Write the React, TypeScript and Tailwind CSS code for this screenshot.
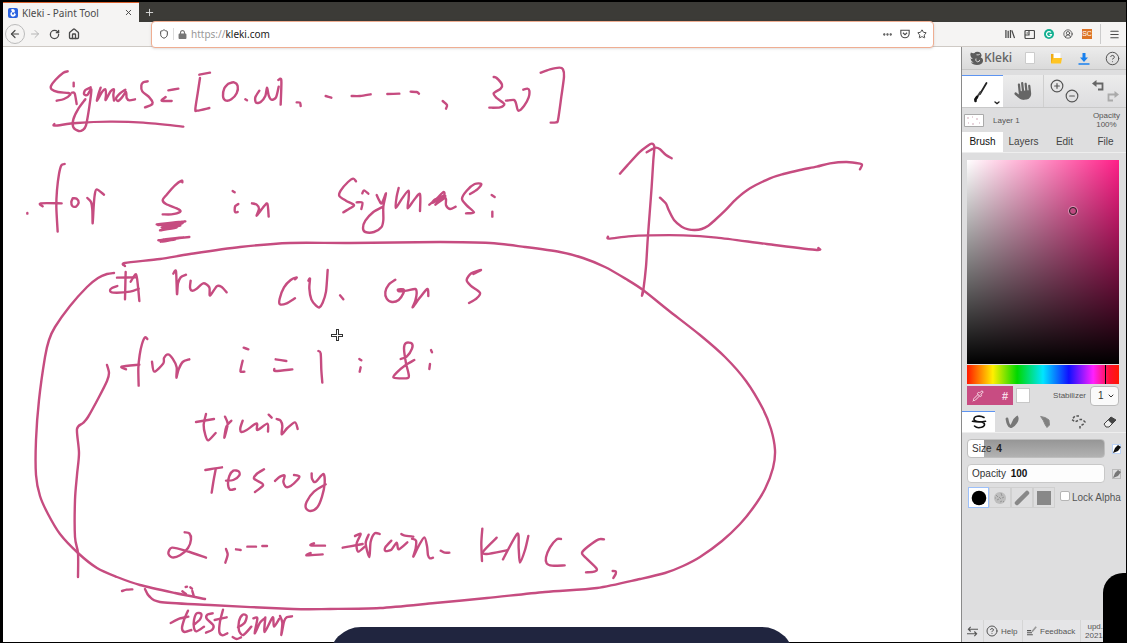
import React, { useState } from "react";
import {
  ArrowLeft, ArrowRight, RotateCw, House, Shield, Ellipsis, Star, Menu, X, Plus,
  CircleQuestionMark, CirclePlus, CircleMinus, ChevronDown, Pipette, CircleUserRound,
} from "lucide-react";
import { FaHand, FaLock } from "react-icons/fa6";

type Sheet = { x: number; y: number; unit: number; strokes: string[] };

const sheets: Sheet[] = [
  {
    x: 0, y: 50, unit: 3,
    strokes: [
      "203,64 190,68 166,90 153,108 155,118 174,126 205,129 211,134 192,147 170,152",
      "221,98 221,109", "216,128 224,130 230,162",
      "272,112 256,120 252,132 262,135 274,118 268,170 258,226 248,240 236,243 220,232 220,208 234,178 256,148",
      "302,113 296,130 291,152 306,126 316,118 318,134 317,150 332,124 342,118 340,135 342,152",
      "376,119 360,130 348,145 354,153 366,142 378,126 380,144 388,151 405,148",
      "443,94 430,97 424,106 427,124 448,142 458,158 452,166 435,172",
      "505,121 535,116", "497,141 485,152 515,153",
      "630,68 598,74", "600,84 593,130 586,178 592,182 628,174",
      "685,101 673,115 669,138 676,151 694,148 710,130 713,108 702,97 685,101",
      "736,148 741,151",
      "778,122 766,142 768,158 782,156 796,138 801,113 806,136 814,149 828,142 836,110",
      "835,90 844,91 842,164", "890,157 900,158 902,168",
      "163,222 165,227 230,219 330,215 430,218 550,230",
      "82,489 82,491",
      "194,342 184,346 177,372 171,420 169,470 173,545", "128,469 122,460 185,460",
      "218,445 214,456 217,468 228,470 236,458 230,446 218,445",
      "262,444 273,456 277,480 278,520 281,470 284,436 290,418 312,434",
      "547,397 545,392 525,406 500,434 488,450 498,462 536,478 540,486 514,493 488,493",
      "470,523 556,514 474,525 548,519 485,532 541,527 480,541 530,532 500,530 545,521",
      "568,561 475,571 550,562 482,575 526,568 490,568",
    ],
  },
  {
    x: 0, y: 50, unit: 3,
    strokes: [
      "698,423 704,427", "715,462 706,468 704,480 706,487 713,486",
      "756,460 770,464 777,476 770,497 788,474 802,461 806,500",
    ],
  },
  {
    x: 300, y: 50, unit: 3,
    strokes: [
      "77,138 94,143", "155,138 180,138 212,133", "262,132 298,131", "332,125 350,126 357,131",
      "428,153 441,165 438,176",
      "581,81 590,84 606,104 602,116 581,130 590,144 613,162 600,172 568,173",
      "618,152 642,150 648,160 655,182 672,168 686,142 688,122 682,116 670,119",
      "722,68 750,58 778,53 789,58 792,80 784,140 774,210 768,217 752,218",
      "168,394 160,386 144,396 122,422 118,438 138,452 162,465 150,475 130,487",
      "187,430 192,421 205,431", "170,457 187,458 184,477",
      "230,435 236,448 245,460 258,430 250,470 250,510 244,532 222,546 196,546 189,534 196,512 220,486 245,472",
      "296,414 290,440 287,474 306,446 325,422 326,445 323,475 342,450 360,432 360,483",
      "388,464 410,446 430,426 432,436 406,448 398,458 436,438 406,464 436,444 438,466 450,477 467,470",
      "510,432 532,418 544,402 524,402 500,422 486,446 500,466 522,487 498,490",
      "575,435 584,441", "577,485 577,500",
    ],
  },
  {
    x: 600, y: 130, unit: 3,
    strokes: [
      "60,131 82,106 118,67 142,48 155,41 163,50 160,90 155,170 149,250 143,330 138,410 130,480 126,497 128,485",
      "140,67 155,58 168,53 180,58 198,75 215,85",
      "24,320 27,326 85,319 150,316 250,316 350,323 500,342 650,360 655,354",
      "180,203 198,221 206,240 222,270 245,290 265,298 285,300 305,297 325,287 345,270 375,242 410,206 450,175 510,145 550,132 600,120 650,110 690,100 740,96 780,101 786,105 780,118",
    ],
  },
  {
    x: 0, y: 0, unit: 1,
    strokes: [
      "125,266 125,263 160,259 190,254 240,247 290,243 350,243 440,242 490,243 525,247 560,252 583,258 605,267 626,279 643,290 668,310 700,335 725,357 746,381 763,409 771,429 775,450 773,468 765,489 753,508 740,524 722,541 700,557 683,566 665,573 640,579 597,588 545,592 487,598 435,603 380,608 330,609 293,609 210,605 160,602 149,596 145,589",
      "114,273 107,274 98,278 87,287 70,306 55,327 49,340 45,357 39,400 36,440 36,475 40,496 48,514 60,534 78,553 97,568 117,577 140,585 175,593 205,599",
      "107,365 109,373 107,381 99,397 88,417 83,423 77,429 79,453 77,475 75,500 75,537 78,553 78,577",
    ],
  },
  {
    x: 30, y: 240, unit: 3,
    strokes: [
      "287,96 286,135 285,178", "302,125 318,103 324,140 328,183", "261,113 318,112",
      "262,138 246,144 240,152 250,158 300,155 326,146",
      "430,101 438,94 441,162 444,130 452,112 468,104",
      "482,122 480,142 486,152 500,146 520,130 538,142 540,167 560,139 574,140 590,157",
      "352,297 345,292 336,312 329,345 325,385 326,437", "288,388 275,380 328,374",
      "366,365 373,395 400,370 402,354 414,343 428,356 440,382 439,413 446,388 458,366 478,358",
      "641,323 655,328", "638,362 632,388 632,395 643,395",
    ],
  },
  {
    x: 260, y: 240, unit: 3,
    strokes: [
      "105,118 110,112 92,120 72,142 59,176 60,193 80,190 105,175",
      "145,122 150,116 148,145 154,178 168,197 178,202 188,188 198,155 203,90", "240,166 250,178",
      "406,119 386,134 376,156 380,176 396,186 416,180 430,160 430,148 414,149 418,154 440,152 466,147 470,160 466,182 458,202 478,175 502,147 505,168",
      "640,102 663,90 634,100 620,120 632,137 660,158 650,175 627,189",
      "47,358 79,363", "43,387 47,393 97,388", "175,333 182,340 184,390 187,428",
      "298,357 304,361", "302,382 299,395",
      "463,360 436,376 410,398 400,412 418,415 445,413 445,398 438,370 432,325 438,309 455,310 456,326 440,350 422,357",
      "513,330 516,337", "510,372 508,387",
    ],
  },
  {
    x: 60, y: 400, unit: 3,
    strokes: [
      "438,42 431,75 436,105 445,121 467,99", "408,66 462,57",
      "495,50 503,70 499,92 493,113 499,80 514,62",
      "548,62 541,84 544,96 560,90 590,70 592,90 622,71 624,95", "626,44 635,53",
      "650,57 662,62 667,78 665,103 682,84 705,67 713,87",
      "436,210 460,206 486,202", "467,208 461,240 455,278",
      "498,242 520,240 538,226 536,214 520,212 508,228 504,252 510,269 525,267",
      "612,208 590,222 582,236 606,250 608,258 585,276",
      "645,243 660,230 674,227 670,245 678,261 692,258 712,240 718,229 702,225",
      "755,220 756,236 766,246 790,222 794,250 786,290 772,322 752,333 738,325 740,305 762,275 797,253",
      "374,397 388,400 393,418 384,444 360,466 336,472 325,460 336,443 380,453 438,473",
      "498,447 503,464 496,488", "528,448 542,450", "562,440 588,440", "607,438 621,438",
      "762,430 752,436 795,437", "752,459 740,466 788,463",
      "186,573 200,569 217,568", "377,561 381,560", "391,562 396,566", "367,574 378,582", "397,573 401,587",
      "384,632 372,660 366,685 374,696 394,690", "332,669 358,656 385,650",
      "402,674 420,658 424,642 410,640 402,660 402,684 410,694 432,680",
      "458,640 442,644 440,656 460,676 456,690 438,698",
      "489,629 480,665 478,696 488,706 502,700", "464,660 500,652",
      "518,711 530,717 543,712",
      "534,682 554,668 560,648 548,644 537,664 537,692 550,705 574,680",
      "580,655 592,655 584,700 600,668 614,655", "616,652 614,696 638,652 642,680 658,656",
      "660,648 667,668 664,705 672,665 680,652 696,649",
    ],
  },
  {
    x: 330, y: 500, unit: 3,
    strokes: [
      "75,108 92,102 80,130 84,155 104,140", "38,143 60,139 98,132",
      "116,104 107,130 118,171 122,125 134,100 149,102",
      "184,122 166,142 166,153 184,149 200,128 206,148 232,127", "214,102 222,106 250,110",
      "246,116 258,122 257,145 250,170 266,138 283,112 291,138 294,166 300,175 309,173",
      "332,152 344,158 358,158",
      "457,86 454,130 456,183", "500,113 460,154 470,162 530,151",
      "519,178 562,101 566,145 570,188 585,150 595,108",
      "693,117 680,118 660,142 648,172 650,190 666,197 704,196",
      "822,118 806,118 776,138 756,158 768,174 800,206 792,215 768,217", "848,213 857,214 857,222 850,234",
    ],
  },
];

/* Turns sampled pen positions into a smooth curve. */
function smooth(samples: string): string {
  const p = samples.split(" ").map((s) => s.split(",").map(Number));
  let d = `M${p[0][0]} ${p[0][1]}`;
  for (let i = 0; i < p.length - 1; i++) {
    const a = p[i - 1] ?? p[i];
    const b = p[i];
    const c = p[i + 1];
    const e = p[i + 2] ?? c;
    const k = 7;
    d += `C${b[0] + (c[0] - a[0]) / k} ${b[1] + (c[1] - a[1]) / k} ${c[0] - (e[0] - b[0]) / k} ${c[1] - (e[1] - b[1]) / k} ${c[0]} ${c[1]}`;
  }
  return d;
}

function Canvas() {
  return (
    <main className="min-w-0 flex-1 overflow-hidden bg-white">
      <svg className="block h-full w-full" viewBox="3 47 958 595" preserveAspectRatio="xMinYMin slice" fill="none" strokeLinecap="round" strokeLinejoin="round" role="img" aria-label="Canvas">
        {sheets.map((s, i) => (
          <g key={i} transform={`translate(${s.x} ${s.y}) scale(${1 / s.unit})`} stroke="#c64c80" strokeWidth={2.4 * s.unit}>
            {s.strokes.map((t, j) => <path key={j} d={smooth(t)} />)}
          </g>
        ))}
        <path d="M331 335.500h12M337.500 329v12" stroke="#333" strokeWidth="3" strokeLinecap="butt" />
        <path d="M332 335.500h10M337.500 330v10" stroke="#fff" strokeWidth="1" strokeLinecap="butt" />
      </svg>
    </main>
  );
}

function Browser() {
  return (
    <header>
      <div className="flex h-5 bg-[#3c3b37]">
        <div className="flex w-[136px] items-center border-t border-[#d9602c] bg-[#f5f4f3] pl-[5px] pr-[5px]">
          <svg viewBox="0 0 10 10" className="size-[10px]"><rect width="10" height="10" rx="2" fill="#2b63e0" /><path d="M3 1.500Q6 0 7 3L6 5Q9 6 7 8Q4 10 2.500 7Q2 4 4 4Z" fill="#fff" /><path d="M4 4.500h2v2H4z" fill="#2b63e0" /></svg>
          <span className="ml-1 flex-1 font-['Noto_Sans',sans-serif] text-[10px] leading-4 text-[#4a4a4a]">Kleki - Paint Tool</span>
          <button aria-label="Close tab" className="p-px"><X className="size-[9px] text-[#444]" strokeWidth={2.5} /></button>
        </div>
        <button aria-label="New tab" className="px-[5px] text-[#ddd]"><Plus className="size-[11px]" /></button>
      </div>
      <div className="flex h-[25px] items-center border-b border-[#cfcac5] bg-[#f5f4f3] text-[#4a4a4a]">
        <nav className="flex w-[148px] items-center gap-[8px] pl-[2px]">
          <button aria-label="Back" className="grid size-5 place-items-center rounded-full border border-[#bbb]"><ArrowLeft className="size-3" strokeWidth={2.4} /></button>
          <button aria-label="Forward" className="-ml-1 text-[#b5b5b5]"><ArrowRight className="size-3" /></button>
          <button aria-label="Reload"><RotateCw className="size-[11px]" strokeWidth={2.8} /></button>
          <button aria-label="Home"><House className="size-3" strokeWidth={2.6} /></button>
        </nav>
        <div className="z-10 flex h-[27px] min-w-0 flex-1 items-center rounded-sm border border-[#efae92] bg-white pl-[7px] pr-[6px] shadow-sm">
          <Shield className="size-[10px]" strokeWidth={2.4} />
          <span className="mx-1 h-3 w-px bg-[#ddd]" />
          <FaLock className="mr-1 size-[9px] text-[#777]" />
          <label className="relative flex min-w-0 flex-1 items-center">
            <span aria-hidden="true" className="font-['Noto_Sans',sans-serif] text-[10px] leading-4 text-[#999]">https://<span className="text-[#222]">kleki.com</span></span>
            <input aria-label="Address" defaultValue="https://kleki.com" className="absolute inset-0 w-full opacity-0" />
          </label>
          <div className="flex items-center gap-[7px]">
            <button aria-label="Page actions"><Ellipsis className="size-[11px]" strokeWidth={3} /></button>
            <button aria-label="Save to Pocket"><svg viewBox="0 0 12 12" className="size-[10px]" fill="none" stroke="currentColor" strokeWidth="1.300"><path d="M1 1.500h10v4a5 5 0 0 1-10 0z" /><path d="m3.500 4.500 2.500 2.300 2.500-2.300" /></svg></button>
            <button aria-label="Bookmark"><Star className="size-[10px]" strokeWidth={2.4} /></button>
          </div>
        </div>
        <div className="flex w-[192px] items-center justify-end gap-[9px] pr-[6px]">
          <button aria-label="Library"><svg viewBox="0 0 11 11" className="size-[10px]" fill="none" stroke="currentColor" strokeWidth="1.400"><path d="M1 1v9M3.500 2v8M6 1v9M7.500 1.500l3 8.500" /></svg></button>
          <button aria-label="Sidebars"><svg viewBox="0 0 11 11" className="size-[11px]" fill="none" stroke="currentColor" strokeWidth="1.200"><rect x="1" y="1.500" width="9.500" height="8" rx="1" /><path d="M5 1.500v4.500H1M2.500 4h1.500" /></svg></button>
          <button aria-label="Grammar" className="grid size-[10px] place-items-center rounded-full bg-[#13b091] text-white"><svg viewBox="0 0 10 10" className="size-[10px]" fill="none" stroke="currentColor" strokeWidth="1.200"><path d="M7 3.500a2.500 2.500 0 1 0 .5 2H5.500" /></svg></button>
          <button aria-label="Account"><CircleUserRound className="size-[10px]" /></button>
          <button aria-label="SC extension" className="h-[10px] w-[10px] bg-[#dd7426] font-['Liberation_Sans',sans-serif] text-[7px] leading-[10px] text-white">SC</button>
          <span className="-mx-px h-5 w-px bg-[#ccc]" />
          <button aria-label="Menu"><Menu className="size-[11px]" strokeWidth={2.5} /></button>
        </div>
      </div>
    </header>
  );
}

function UndoIcon({ className }: { className: string }) {
  return <svg viewBox="0 0 12 12" className={className} fill="none" stroke="currentColor" strokeWidth="1.800"><path d="M3 3.500h7.500v6H6" /><path d="M4.500 0v7L0 3.500z" fill="currentColor" stroke="none" /></svg>;
}

const panelTabs = ["Brush", "Layers", "Edit", "File"];

const brushIcons = [
  <path key="pen" d="M14 3.500C10 1 3.500 2 4 5.500C4.500 8 8 7.500 11.500 8C15.500 8.800 15.500 12 11.500 13.300C9 14 6 13.500 4.500 12M2.500 7.300C7 8.300 11 8.300 15.500 7.300" stroke="#111" strokeWidth="1.600" />,
  <path key="blend" d="M4 5C4.500 8 6 12 7.500 12.500C10 12 10 6 14 3.500C15 6 12 11 8.500 12.500" stroke="#777" strokeWidth="2.800" />,
  <path key="sketch" d="M5 2.500Q10 3 13 6L13.500 11L11 13.500Q9 11 7.500 7Z" stroke="#888" strokeWidth="1" fill="#808080" />,
  <path key="pixel" d="M10 2H6L3 5.500L6 8L11 5.500H13.500L16 8L14 10.500L11 12V14.500" stroke="#555" strokeWidth="1.500" strokeDasharray="2.600 1.800" strokeLinecap="butt" />,
];

function Sidebar() {
  const [panel, setPanel] = useState(0);
  const [brush, setBrush] = useState(0);
  return (
    <aside className="flex w-[165px] shrink-0 flex-col border-l border-[#8a8a8a] bg-[#dededf] font-['Liberation_Sans',sans-serif] text-[#555]">
      <div className="flex h-[23px] items-center border-b border-[#c5c5c5] bg-linear-to-b from-[#ececec] to-[#dadada]">
        <a href="#home" className="flex w-[54px] items-center gap-px pl-[8px]">
          <svg viewBox="0 0 14 15" className="h-[15px] w-[13px] shrink-0" fill="#5c5c5c"><path d="M1 1q3 2 5-.5q6-1 6.500 4l-1 2q3 .5 2.500 4q-1 4-6.500 4q-4.500 0-6.500-3l3 .5q-3.500-2-3.500-5q1 1.500 2.500 1Q-1 5 1 1z" /><path d="M7 3.500Q9 4 10.500 3M6.500 7.500Q5 10 8 11Q10.500 11 10.500 9" stroke="#ddd" strokeWidth="1" fill="none" /></svg>
          <span className="font-['Open_Sans',sans-serif] text-[12px] font-semibold leading-5 text-[#666]">Kleki</span>
        </a>
        <div className="flex flex-1 items-center justify-between pl-[9px] pr-[6px]">
          <button aria-label="New image"><svg viewBox="0 0 10 12" className="h-3 w-[10px]"><path d="M.5.5h9v11h-9z" fill="#fff" stroke="#ccc" /></svg></button>
          <button aria-label="Open"><svg viewBox="0 0 12 12" className="size-3"><path d="M1 2h3v9H1z" fill="#efac16" /><path d="M3.500 1h7v6h-7z" fill="#fff" /><path d="M3 6h9l-1 5.500H1z" fill="#ffc524" /></svg></button>
          <button aria-label="Save"><svg viewBox="0 0 12 13" className="h-[13px] w-3" fill="#1880ee"><path d="M4.500 1h3v4.500H10L6 10 2 5.500h2.500zM.5 11.200h11v1.500H.5z" /></svg></button>
          <button aria-label="Help"><CircleQuestionMark className="size-[15px]" strokeWidth={1.6} /></button>
        </div>
      </div>
      <div className="mt-[5px] flex h-[33px] border-b border-[#c9c9c9] bg-linear-to-b from-[#ececec] to-[#dddddf]">
        <button aria-label="Brush tool" className="w-[41px] shrink-0 border-t border-[#5d94f1] bg-white">
          <svg viewBox="0 0 41 32" className="h-8 w-[41px]" fill="none" strokeLinecap="round"><path d="M24.500 7 18 18" stroke="#222" strokeWidth="1.800" /><path d="m18.500 16-4 6" stroke="#444" strokeWidth="2" /><path d="M15 21q-2 2-1.500 4" stroke="#111" strokeWidth="2.600" /><path d="m33 26 2 1.500 2-1.500" stroke="#222" strokeWidth="1.400" /></svg>
        </button>
        <button aria-label="Hand tool" className="grid w-[41px] shrink-0 place-items-center border-r border-[#cfcfcf]"><FaHand className="size-[18px] -rotate-6 text-[#666]" /></button>
        <div className="flex w-[41px] shrink-0 gap-px px-[6px] text-[#555]">
          <button aria-label="Zoom in" className="self-start pt-1"><CirclePlus className="size-[14px]" /></button>
          <button aria-label="Zoom out" className="self-end pb-[4px]"><CircleMinus className="size-[14px]" /></button>
        </div>
        <div className="flex flex-1 justify-center gap-[3px]">
          <button aria-label="Undo" className="self-start pt-[5px]"><UndoIcon className="size-3 text-[#666]" /></button>
          <button aria-label="Redo" className="self-end pb-1"><UndoIcon className="size-3 -scale-x-100 text-[#aaa]" /></button>
        </div>
      </div>
      <div className="flex h-6 items-center justify-between pl-[2px] pr-[6px] text-[8px] leading-[9px] text-[#555]">
        <div className="flex items-center gap-[9px]">
          <svg viewBox="0 0 20 13" className="h-[13px] w-5"><path d="M.5.5h19v12H.5z" fill="#fff" stroke="#aaa" /><path d="M3 4h2M8 3h1M12 5h2M4 9h1M8 10h2M15 9h1" stroke="#cfa9b8" /></svg>
          <span>Layer 1</span>
        </div>
        <span className="text-center">Opacity<br />100%</span>
      </div>
      <div role="tablist" className="flex h-[21px] border-b border-[#eee] text-[10px] leading-5">
        {panelTabs.map((t, i) => (
          <button key={t} role="tab" aria-selected={panel === i} onClick={() => setPanel(i)} className={panel === i ? "w-[41px] bg-white text-[#111]" : "w-[41px] text-[#444]"}>{t}</button>
        ))}
      </div>
      <div className="pl-[5px] pr-[7px] pt-[7px]">
        <div className="relative h-[204px] bg-[#ff1f88] bg-[linear-gradient(to_top,#000,transparent),linear-gradient(to_right,#fff,transparent)]">
          <span className="absolute left-[67%] top-[23%] size-2 rounded-full border border-[#222] ring-1 ring-white/40" />
        </div>
        <div className="relative mt-px h-[19px] bg-[linear-gradient(to_right,#ff1800,#ffef00_17%,#00d800_33%,#00e5ff_50%,#1010ff_67%,#ff20ff_83%,#ff1030_94%,#ff1800)]">
          <span className="absolute inset-y-0 left-[91%] w-px bg-black" />
        </div>
        <div className="mt-[2px] flex h-[19px] items-center">
          <div className="flex h-full w-[46px] items-center justify-between bg-[#c84c82] px-[5px] text-[#f7dce7]">
            <button aria-label="Pick colour"><Pipette className="size-3" /></button>
            <button aria-label="Hex colour" className="text-[11px] font-bold leading-4">#</button>
          </div>
          <button aria-label="Second colour" className="ml-[3px] h-[15px] w-[14px] border border-[#c8c8c8] bg-white" />
          <label className="flex flex-1 items-center justify-end gap-1 text-[8px] leading-4 text-[#555]">
            Stabilizer
            <span className="relative flex items-center">
              <select defaultValue="1" className="h-5 w-[29px] appearance-none rounded-sm border border-[#bbb] bg-[#fafafa] pl-[7px] text-[10px] text-[#333]"><option>0</option><option>1</option><option>2</option><option>3</option></select>
              <ChevronDown className="pointer-events-none absolute right-1 size-2 text-[#333]" strokeWidth={3} />
            </span>
          </label>
        </div>
      </div>
      <div className="mt-[6px] flex h-[22px] border-b border-[#eee]">
        {brushIcons.map((icon, i) => (
          <button key={i} aria-label={`Brush ${i + 1}`} onClick={() => setBrush(i)} className={brush === i ? "grid w-[33px] place-items-center border-t border-[#5d94f1] bg-white" : "grid w-[33px] place-items-center"}>
            <svg viewBox="0 0 18 16" className="h-4 w-[18px]" fill="none" strokeLinecap="round">{icon}</svg>
          </button>
        ))}
        <button aria-label="Eraser" className="grid flex-1 place-items-center"><svg viewBox="0 0 14 14" className="size-[14px]"><path d="m1 9 7-7 5 3-7 7H3z" fill="#eee" stroke="#444" /><path d="m5 5 3-3 5 3-4 4z" fill="#444" /></svg></button>
      </div>
      <div className="flex flex-col gap-[6px] px-[5px] pt-[6px] text-[10px] leading-[18px] text-[#333]">
        <div className="flex items-center gap-[7px]">
          <label className="relative block h-[19px] w-[138px] rounded-[4px] border border-[#bebebe] bg-[linear-gradient(to_right,#fff_12%,transparent_12%),linear-gradient(to_bottom,#969696,#b2b2b2)] pl-1">
            Size <span className="ml-[2px] font-bold text-[#222]">4</span>
            <input type="range" aria-label="Size" defaultValue={4} className="absolute inset-0 h-full w-full opacity-0" />
          </label>
          <button aria-label="Size pressure" className="grid h-[10px] w-[9px] place-items-center border border-[#bcd3f7] bg-white"><svg viewBox="0 0 8 8" className="size-2"><path d="M0 8 2 3l3-3 3 2-3 4z" fill="#111" /></svg></button>
        </div>
        <div className="flex items-center gap-[7px]">
          <label className="relative block h-[19px] w-[138px] rounded-[4px] border border-[#c8c8c8] bg-[#fdfdfd] pl-1">
            Opacity <span className="ml-[2px] font-bold text-[#111]">100</span>
            <input type="range" aria-label="Opacity" defaultValue={100} className="absolute inset-0 h-full w-full opacity-0" />
          </label>
          <button aria-label="Opacity pressure" className="grid h-[10px] w-[9px] place-items-center border border-[#bbb]"><svg viewBox="0 0 8 8" className="size-2"><path d="M0 8 2 3l3-3 3 2-3 4z" fill="#777" /></svg></button>
        </div>
      </div>
      <div className="flex items-center pl-[6px] pt-[4px]">
        <button aria-label="Round tip" className="grid size-[21px] place-items-center border border-[#9cc0fa] bg-white"><svg viewBox="0 0 16 16" className="size-4"><circle cx="8" cy="8" r="7.300" /></svg></button>
        <button aria-label="Chalk tip" className="grid h-[21px] w-[22px] place-items-center border border-[#d0d0d0]"><svg viewBox="0 0 16 16" className="size-4"><circle cx="8" cy="8" r="6" fill="#bdbdbd" /><path d="M4 5l2 2M9 3l1 3M12 7l-2 1M5 10l2-1M8 12l2-1M7 7l2 2M11 11l1 1M3 8h1" stroke="#979797" fill="none" /></svg></button>
        <button aria-label="Calligraphy tip" className="grid h-[21px] w-[22px] place-items-center border border-[#d0d0d0]"><svg viewBox="0 0 16 16" className="size-4"><path d="m3 13 10-10" stroke="#888" strokeWidth="4.500" strokeLinecap="round" /></svg></button>
        <button aria-label="Square tip" className="grid h-[21px] w-[22px] place-items-center border border-[#d0d0d0]"><svg viewBox="0 0 16 16" className="size-4"><path d="M1 1h14v14H1z" fill="#888" /></svg></button>
        <label className="ml-[5px] flex items-center gap-[2px] whitespace-nowrap text-[10px] leading-5 text-[#555]">
          <input type="checkbox" className="mb-1 size-[10px] shrink-0 appearance-none rounded-[2px] border border-[#b5b5b5] bg-white" />Lock Alpha
        </label>
      </div>
      <footer className="mt-auto flex h-[22px] items-center overflow-hidden bg-[#e5e5e7] text-[8px] leading-[9px] text-[#555]">
        <button aria-label="Switch side" className="grid h-full w-[22px] shrink-0 place-items-center border-r border-[#d5d5d5]"><svg viewBox="0 0 12 12" className="size-[11px]" fill="none" stroke="currentColor" strokeWidth="1.200"><path d="M12 3.500H1.500M4 1 1.500 3.500 4 6M0 8.500h10.500M8 6l2.500 2.500L8 11" /></svg></button>
        <a href="#help" className="flex h-full w-[39px] shrink-0 items-center gap-[3px] border-r border-[#d5d5d5] pl-[2px]"><CircleQuestionMark className="size-3" />Help</a>
        <a href="#feedback" className="flex h-full w-[58px] shrink-0 items-center gap-[3px] border-r border-[#d5d5d5] pl-[4px]"><svg viewBox="0 0 12 12" className="size-[10px]" fill="none" stroke="currentColor"><path d="M0 5.500h5M0 8h6M0 10.500h7" strokeWidth="1.300" /><path d="m6 7 5-6" strokeWidth="2" stroke="#999" /></svg>Feedback</a>
        <span className="shrink-0 pl-1 text-center">upd.<br />2021-</span>
      </footer>
    </aside>
  );
}

export default function App() {
  return (
    <div className="relative flex h-screen flex-col overflow-hidden bg-black pb-px pl-[3px] pr-px pt-[2px]">
      <Browser />
      <div className="flex min-h-0 flex-1">
        <Canvas />
        <Sidebar />
      </div>
      <div className="absolute -bottom-4 left-[329px] right-[333px] h-8 rounded-t-[32px] bg-[#20253f]" />
      <div className="absolute bottom-0 right-0 h-[70px] w-6 rounded-tl-[20px] bg-black" />
    </div>
  );
}
